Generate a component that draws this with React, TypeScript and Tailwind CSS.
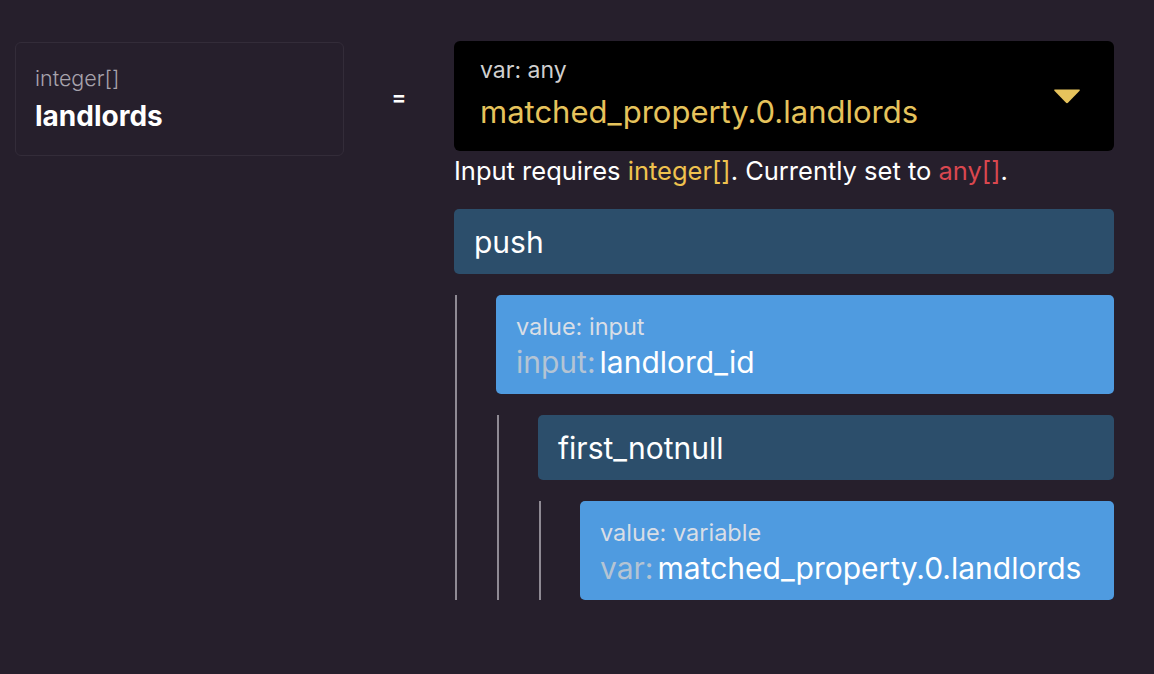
const font = { fontFamily: "Inter, 'Noto Sans', sans-serif" };

const FnBlock = ({ name }: { name: string }) => (
  <div className="h-[65px] rounded-[5px] bg-[#2c4e6b] pl-[20px] flex items-center text-[30px] leading-[36px] text-white">
    {name}
  </div>
);

const ValueBlock = ({ kind, label, value }: { kind: string; label: string; value: string }) => (
  <div className="h-[99px] rounded-[5px] bg-[#4f9be0] pl-[20px] pt-[18px]">
    <div className="text-[23.5px] leading-[28px] text-[#d9dee6]">value: {kind}</div>
    <div className="mt-[3px] text-[30px] leading-[36px] flex items-baseline">
      <span className="text-[#b4c4d4] mr-[4px]">{label}:</span>
      <span className="text-white">{value}</span>
    </div>
  </div>
);

const Nest = ({ children }: { children: React.ReactNode }) => (
  <div className="mt-[21px] ml-px border-l-2 border-[#8f8a94] pl-[39px] flex flex-col">{children}</div>
);

export default function App() {
  return (
    <div className="min-h-screen w-full bg-[#261f2c] flex items-start pt-[41px] pl-[15px]" style={font}>
      <div className="mt-px w-[329px] h-[114px] rounded-md border border-[#332c39] bg-[#261f2c] pl-[19px] pt-[21px]">
        <div className="text-[21.5px] leading-[28px] font-light text-[#a8a3ad]">integer[]</div>
        <div className="mt-[7px] text-[28px] leading-[34px] font-bold text-white">landlords</div>
      </div>
      <div className="w-[110px] h-[112px] flex items-center justify-center text-[22px] font-semibold text-white">=</div>
      <div className="w-[660px] flex flex-col">
        <div className="h-[110px] rounded-md bg-black pl-[26px] pr-[33px] flex items-start justify-between">
          <div className="flex flex-col pt-[15px]">
            <div className="text-[23px] leading-[28px] text-[#cfcfcf]">var: any</div>
            <div className="mt-[10px] text-[31px] leading-[36px] text-[#e6c35c]">matched_property.0.landlords</div>
          </div>
          <svg width="28" height="16" viewBox="0 0 28 16" className="mt-[47px]">
            <path d="M2 1.5 L26 1.5 Q27.5 1.5 26.6 2.8 L15.2 14.6 Q14 15.8 12.8 14.6 L1.4 2.8 Q0.5 1.5 2 1.5 Z" fill="#e6c35c" />
          </svg>
        </div>
        <div className="mt-[5px] text-[25.5px] leading-[30px] text-white">
          Input requires <span className="text-[#f0c24e]">integer[]</span>. Currently set to{" "}
          <span className="text-[#d9474f]">any[]</span>.
        </div>
        <div className="mt-[23px] flex flex-col">
          <FnBlock name="push" />
          <Nest>
            <ValueBlock kind="input" label="input" value="landlord_id" />
            <Nest>
              <FnBlock name="first_notnull" />
              <Nest>
                <ValueBlock kind="variable" label="var" value="matched_property.0.landlords" />
              </Nest>
            </Nest>
          </Nest>
        </div>
      </div>
    </div>
  );
}
